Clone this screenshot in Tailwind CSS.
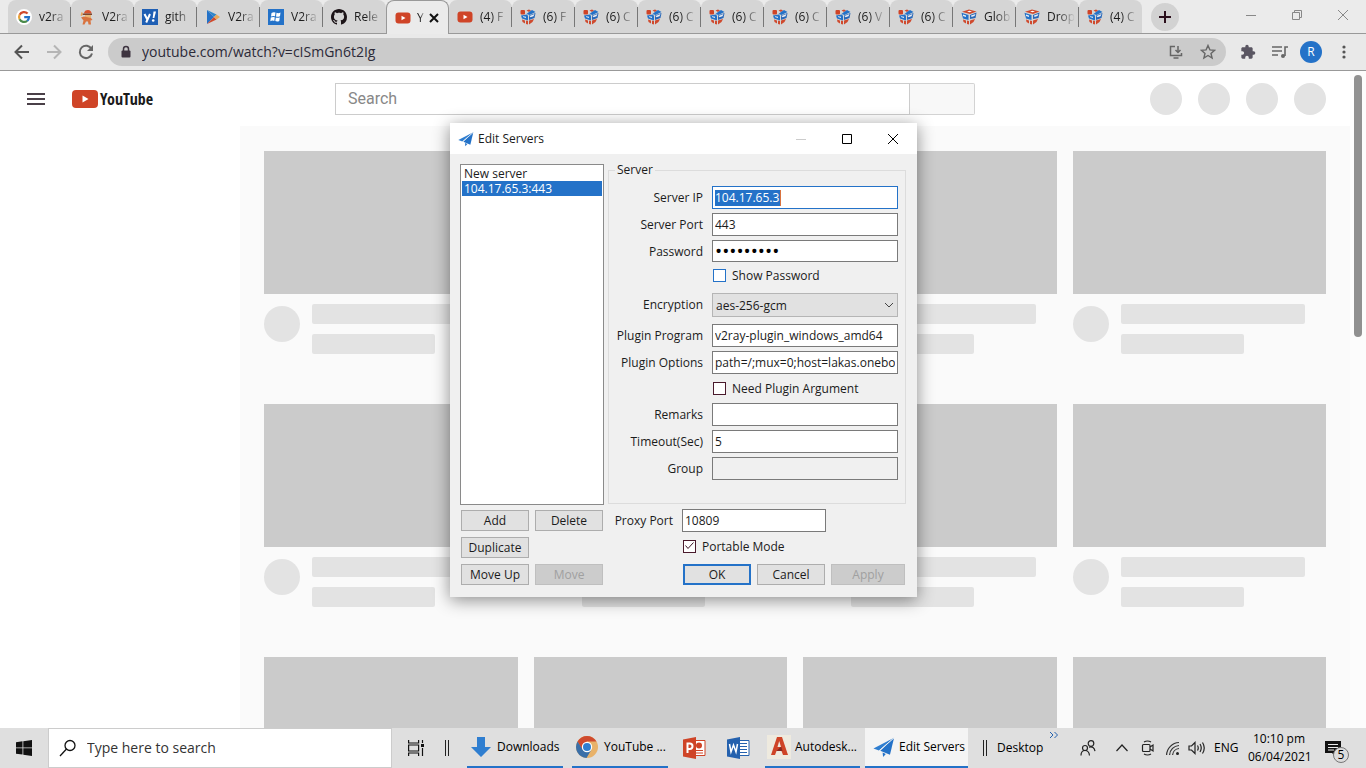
<!DOCTYPE html>
<html lang="en">
<head>
  <meta charset="UTF-8" />
  <meta name="viewport" content="width=device-width, initial-scale=1.0" />
  <title>YouTube</title>
  <script src="https://cdn.jsdelivr.net/npm/@tailwindcss/browser@4"></script>
</head>
<body class="h-screen flex flex-col overflow-hidden bg-white text-[#1b1b1b] text-xs font-['Open_Sans','Noto_Sans',sans-serif]">

  <!-- shared icons -->
  <svg class="hidden">
    <symbol id="i-google" viewBox="0 0 16 16">
      <circle cx="8" cy="8" r="8" fill="#fff"/>
      <g fill="none" stroke-width="2.2">
        <path d="M11.6 4.6A5 5 0 0 0 3.6 5.8" stroke="#d04a2c"/>
        <path d="M3.6 5.8a5 5 0 0 0 0 4.4" stroke="#e8a33a"/>
        <path d="M3.6 10.2a5 5 0 0 0 7.6 1.6" stroke="#4a8a4a"/>
        <path d="M11.2 11.8A5 5 0 0 0 13 8.2H8.2" stroke="#2472c8"/>
      </g>
    </symbol>
    <symbol id="i-pirate" viewBox="0 0 16 16">
      <path d="M5 4.500C5 2 7 1 9 1s3.500 1.500 3.500 3.500z" fill="#d9532f"/>
      <path d="M3.500 4.500H13V6H3.500z" fill="#7a4630"/>
      <path d="M6 6h6v3H6z" fill="#eab676"/>
      <path d="M2 8.500l3-1 7 1.500 1.500 2-2 .5.5 4h-2.500l-.5-3H7l-1.500 3H3.500l1-4z" fill="#d9733f"/>
      <path d="M2.500 3l1.500 1-1 3-1.500-.5z" fill="#e8a35a"/>
    </symbol>
    <symbol id="i-yahoo" viewBox="0 0 16 16">
      <path d="M0 0h16v16H0z" fill="#1f5fb4"/>
      <path d="M2.500 5l2.800 5.500M8 5l-3.800 8.500" stroke="#fff" stroke-width="2" fill="none"/>
      <path d="M11.500 2.500h2.500L12.300 9h-1.600z" fill="#fff"/>
      <circle cx="11.200" cy="11.500" r="1.300" fill="#fff"/>
    </symbol>
    <symbol id="i-play" viewBox="0 0 16 16">
      <path d="M2 1v14l7-7z" fill="#2472c8"/>
      <path d="M2 1l7 7 2.500-2.500z" fill="#2f86c9"/>
      <path d="M2 15l7-7 2.500 2.500z" fill="#d04a2c"/>
      <path d="M11.500 5.500L15 8l-3.500 2.500L9 8z" fill="#e8a95a"/>
    </symbol>
    <symbol id="i-win" viewBox="0 0 16 16">
      <path d="M0 0h16v16H0z" fill="#2472c8"/>
      <path d="M3.500 4q2-1.200 4-.4l-.5 3.600q-2-.7-4 .3zM8.500 3.800q2 .8 4-.2L12 7.200q-2 1-4 .3zM2.800 8.500q2-1 4-.3l-.5 3.700q-2-.8-4 .3zM7.800 8.500q2 .8 4-.2l-.5 3.600q-2 1-4 .2z" fill="#fff"/>
    </symbol>
    <symbol id="i-github" viewBox="0 0 16 16">
      <path fill="#1c1418" d="M8 0C3.580 0 0 3.580 0 8c0 3.540 2.290 6.530 5.470 7.590.4.070.55-.17.55-.38 0-.19-.01-.82-.01-1.490-2.010.37-2.530-.49-2.690-.94-.09-.23-.48-.94-.82-1.130-.28-.15-.68-.52-.01-.53.63-.01 1.080.58 1.230.82.72 1.210 1.870.87 2.330.66.07-.52.28-.87.51-1.070-1.780-.2-3.640-.89-3.640-3.950 0-.87.31-1.590.82-2.150-.08-.2-.36-1.020.08-2.120 0 0 .67-.21 2.200.82.64-.18 1.320-.27 2-.27s1.360.09 2 .27c1.530-1.040 2.200-.82 2.200-.82.44 1.100.16 1.920.08 2.120.51.56.82 1.270.82 2.150 0 3.070-1.870 3.750-3.650 3.950.29.25.54.73.54 1.480 0 1.070-.01 1.930-.01 2.200 0 .21.15.46.55.38A8.010 8.010 0 0 0 16 8c0-4.420-3.580-8-8-8z"/>
    </symbol>
    <symbol id="i-yt" viewBox="0 0 16 16">
      <rect x="0.500" y="2.500" width="15" height="11" rx="3" fill="#cf4427"/>
      <path d="M6.500 5.700v4.600L10.500 8z" fill="#fff"/>
    </symbol>
    <symbol id="i-cube" viewBox="0 0 16 16">
      <path d="M1 2.800L8 .5l7.500 2L9 5z" fill="#cf4a2e"/>
      <path d="M6 2.600l2.500-.8 2.500.8-2.500.7z" fill="#fff"/>
      <path d="M.5 3.800L7.500 6v5L2 9.500z" fill="#2472c8"/>
      <path d="M15.500 3.500L9 6v4l5.500-1z" fill="#2a68b8"/>
      <path d="M10 6.500l4.500-1.500-1 2-3 1z" fill="#e9edf4"/>
      <path d="M2 5.500l3 1v1.500L2 7z" fill="#e9edf4"/>
      <path d="M2 10.500l3 1v3L2.500 13zM6 11.500l2 .5v3.500L6 15zM9 11.500l5-1.500-1.500 3L9 15.500z" fill="#cf4a2e"/>
    </symbol>
    <symbol id="i-cubedot" viewBox="0 0 16 16">
      <path d="M6.500 1.500L9 .5l2 1-2 1.500z" fill="#cf4a2e"/>
      <path d="M9 3l3-2 3.500 2L9.500 6 6.500 5z" fill="#2472c8"/>
      <path d="M1 6.500l6-1 1 1.500v4.500L2 9.500z" fill="#2472c8"/>
      <path d="M15.500 4L9 6.500V11l5.500-2z" fill="#2a68b8"/>
      <path d="M9.500 7l5-2-1 2.200-3 1zM3 7.200l3 .5v1.300L3 8z" fill="#e9edf4"/>
      <path d="M2 10.500l3 1v3L2.500 13zM6 11.500l2 .5v3.500L6 15zM9 11.500l5-1.500-1.500 3L9 15.500z" fill="#cf4a2e"/>
      <rect x="0.500" y="1" width="4.500" height="4.500" rx="1" fill="#cf4427"/>
    </symbol>
    <symbol id="i-plane" viewBox="0 0 24 24">
      <path d="M23 2L.5 13.500l6 2.300z" fill="#2f7ed0"/>
      <path d="M23 2L8 16l10.500 4.500z" fill="#2472c8"/>
      <path d="M10.500 18l3.500 1.500-3 3.500z" fill="#2472c8"/>
      <path d="M23 2L7 15.800" stroke="#f2f2f2" stroke-width="1"/>
    </symbol>
  </svg>

  <!-- tab strip -->
  <header class="h-[34px] shrink-0 flex bg-[#ebebeb] border-b border-[#999]">
    <nav id="tabs" class="flex pl-2 h-[34px]"></nav>
    <button class="ml-[9px] mt-[3px] size-7 rounded-full bg-[#d2d2d2] flex items-center justify-center" aria-label="New tab">
      <svg class="size-3" viewBox="0 0 12 12" stroke="#2b0f1c" stroke-width="2"><path d="M6 0v12M0 6h12"/></svg>
    </button>
    <div class="ml-auto flex items-center gap-8 pr-4 pb-1 text-[#888]">
      <button aria-label="Minimize"><svg class="size-3.5" viewBox="0 0 14 14" fill="none" stroke="currentColor"><path d="M2 7.500h10"/></svg></button>
      <button aria-label="Restore"><svg class="size-3.5" viewBox="0 0 14 14" fill="none" stroke="currentColor"><path d="M2.500 4.500h7v7h-7zM4.500 4V2.500h7v7H10"/></svg></button>
      <button aria-label="Close"><svg class="size-3.5" viewBox="0 0 14 14" fill="none" stroke="currentColor"><path d="M2 2l10 10M12 2L2 12"/></svg></button>
    </div>
  </header>

  <!-- toolbar -->
  <div class="h-[37px] shrink-0 flex items-center bg-[#e9e9e9] border-b border-[#999] px-3.5 text-[#666]">
    <div class="flex items-center gap-4">
      <button aria-label="Back"><svg class="size-4" viewBox="0 0 16 16" fill="none" stroke="#555" stroke-width="2"><path d="M15 8H2M8 1.500L1.500 8 8 14.500"/></svg></button>
      <button aria-label="Forward"><svg class="size-4" viewBox="0 0 16 16" fill="none" stroke="#b5b5b5" stroke-width="2"><path d="M1 8h13M8 1.500L14.500 8 8 14.500"/></svg></button>
      <button aria-label="Reload"><svg class="size-4" viewBox="0 0 16 16" fill="none" stroke="#666" stroke-width="2"><path d="M13.500 5A6.200 6.200 0 1 0 14 9.500"/><path d="M15 1v6H9z" fill="#666" stroke="none"/></svg></button>
    </div>
    <div class="ml-3.5 flex-1 h-7 rounded-full bg-[#cbcbcb] flex items-center pl-3 pr-2.5">
      <svg class="w-3 h-3.5" viewBox="0 0 12 14"><path d="M3.500 6V4a2.500 2.500 0 0 1 5 0v2" fill="none" stroke="#3e3440" stroke-width="1.500"/><rect x="1.500" y="5.500" width="9" height="7" rx="1" fill="#3e3440"/></svg>
      <input class="ml-2.5 flex-1 text-sm text-[#2c2a38] outline-none" aria-label="Address" value="youtube.com/watch?v=cISmGn6t2Ig" />
      <button aria-label="Install"><svg class="size-3.5" viewBox="0 0 14 14" fill="none" stroke="#666" stroke-width="1.500"><path d="M6 1.500H1.500v9h11V8M4.500 13h5M9 1v6M6.500 5L9 7.500 11.500 5"/></svg></button>
      <button class="ml-[17px]" aria-label="Bookmark"><svg class="size-4" viewBox="0 0 16 16" fill="none" stroke="#666" stroke-width="1.400"><path d="M8 1.500l1.900 4.400 4.700.4-3.600 3.100 1.100 4.600L8 11.500 3.900 14 5 9.400 1.400 6.300l4.700-.4z"/></svg></button>
    </div>
    <button class="ml-3.5" aria-label="Extensions"><svg class="size-4" viewBox="0 0 24 24" fill="#5a5662"><path d="M20.500 11H19V7c0-1.100-.9-2-2-2h-4V3.500a2.500 2.500 0 0 0-5 0V5H4c-1.100 0-2 .9-2 2v3.800h1.500a2.700 2.700 0 0 1 0 5.400H2V20c0 1.100.9 2 2 2h3.800v-1.500a2.700 2.700 0 0 1 5.400 0V22H17c1.100 0 2-.9 2-2v-4h1.500a2.500 2.500 0 0 0 0-5z"/></svg></button>
    <button class="ml-4" aria-label="Media"><svg class="size-4" viewBox="0 0 16 16" fill="none" stroke="#666" stroke-width="1.600"><path d="M0 3h10M0 7h10M0 11h6M16 3h-3v9"/><circle cx="11" cy="12" r="2" fill="#666" stroke="none"/></svg></button>
    <button class="ml-3 size-[22px] rounded-full bg-[#2472c8] text-white text-xs" aria-label="Profile">R</button>
    <button class="ml-3.5" aria-label="Menu"><svg class="size-4" viewBox="0 0 16 16" fill="#555"><circle cx="8" cy="3" r="1.600"/><circle cx="8" cy="8" r="1.600"/><circle cx="8" cy="13" r="1.600"/></svg></button>
  </div>

  <!-- page -->
  <main class="relative flex-1 min-h-0 flex overflow-hidden">
    <div class="flex-1 flex flex-col min-w-0">
      <div class="h-[55px] shrink-0 flex items-center pl-[27px] pr-6 bg-white">
        <button aria-label="Guide"><svg class="w-[18px] h-3" viewBox="0 0 18 12" stroke="#4a4048" stroke-width="2"><path d="M0 1h18M0 6h18M0 11h18"/></svg></button>
        <a href="#" class="ml-[27px] w-20 flex items-center gap-0.5" aria-label="YouTube home">
          <svg class="w-[26px] h-[18px] shrink-0" viewBox="0 0 26 18"><rect width="26" height="18" rx="4" fill="#cf4427"/><path d="M10.500 5.500v7l6-3.500z" fill="#fff"/></svg>
          <span class="text-base leading-5 font-bold font-['Liberation_Sans_Narrow','Open_Sans_Condensed','Roboto_Condensed','DejaVu_Sans_Condensed',sans-serif]">YouTube</span>
        </a>
        <form class="ml-[183px] flex h-8 w-[640px]">
          <input class="flex-1 min-w-0 border border-[#ccc] px-3 text-base font-[Roboto] placeholder:text-[#888] outline-none" placeholder="Search" aria-label="Search" />
          <button type="button" class="w-[65px] border border-l-0 border-[#d3d3d3] bg-[#f8f8f8] rounded-r-xs" aria-label="Search"></button>
        </form>
        <div class="ml-auto flex gap-4">
          <span class="size-8 rounded-full bg-[#e3e3e3]"></span>
          <span class="size-8 rounded-full bg-[#e3e3e3]"></span>
          <span class="size-8 rounded-full bg-[#e3e3e3]"></span>
          <span class="size-8 rounded-full bg-[#e3e3e3]"></span>
        </div>
      </div>
      <div class="flex-1 min-h-0 flex">
        <aside class="w-60 shrink-0 bg-white"></aside>
        <div id="grid" class="flex-1 grid grid-cols-4 content-start gap-x-4 gap-y-[50px] px-6 pt-[25px] bg-[#fafafa]"></div>
      </div>
    </div>
    <div class="w-4 shrink-0 bg-[#fcfcfc] flex justify-center pt-1"><div class="w-2 h-[262px] rounded-full bg-[#909090]"></div></div>

    <!-- edit servers window -->
    <section class="absolute left-[450px] top-[52px] w-[467px] bg-[#f0f0f0] shadow-[0_3px_16px_rgba(0,0,0,0.45)]">
      <div class="h-[31px] flex items-center bg-white pl-2 pr-[17px]">
        <svg class="size-4"><use href="#i-plane"/></svg>
        <h1 class="ml-1 text-xs">Edit Servers</h1>
        <div class="ml-auto flex gap-8">
          <button aria-label="Minimize"><svg class="size-3.5" viewBox="0 0 14 14" fill="none" stroke="#ccc"><path d="M2 7.500h10"/></svg></button>
          <button aria-label="Maximize"><svg class="size-3.5" viewBox="0 0 14 14" fill="none" stroke="#000"><path d="M2.500 2.500h9v9h-9z"/></svg></button>
          <button aria-label="Close"><svg class="size-3.5" viewBox="0 0 14 14" fill="none" stroke="#000"><path d="M2 2l10 10M12 2L2 12"/></svg></button>
        </div>
      </div>

      <form class="flex gap-1 pl-2.5 pr-[11px] pt-2.5 pb-3 leading-[15px]">
        <div class="w-36 shrink-0">
          <ul class="h-[341px] bg-white border border-[#8a8a8a] p-px">
            <li class="px-0.5">New server</li>
            <li class="px-0.5 bg-[#2472c8] text-white">104.17.65.3:443</li>
          </ul>
          <div class="grid grid-cols-2 gap-1.5 px-px pt-[5px]">
            <button type="button" class="h-[21px] border border-[#adadad] bg-[#e1e1e1]">Add</button>
            <button type="button" class="h-[21px] border border-[#adadad] bg-[#e1e1e1]">Delete</button>
            <button type="button" class="h-[21px] border border-[#adadad] bg-[#e1e1e1]">Duplicate</button>
            <span></span>
            <button type="button" class="h-[21px] border border-[#adadad] bg-[#e1e1e1]">Move Up</button>
            <button type="button" disabled class="h-[21px] border border-[#bfbfbf] bg-[#cccccc] text-[#a0a0a0]">Move</button>
          </div>
        </div>

        <div class="flex-1 min-w-0">
          <fieldset class="h-[340px] border border-[#dcdcdc] pr-[7px]">
            <legend class="ml-1.5 px-0.5 h-3 leading-3">Server</legend>
            <div class="grid grid-cols-[94px_1fr] gap-x-[9px] gap-y-1 items-center text-right pt-2.5">
              <label for="ip">Server IP</label>
              <div class="h-[23px] border border-[#2472c8] bg-white flex items-center px-0.5"><input id="ip" class="w-[66px] h-4 bg-[#2472c8] text-white outline-none border-r border-[#d9733f]" value="104.17.65.3" /></div>
              <label for="port">Server Port</label>
              <input id="port" class="h-[23px] min-w-0 border border-[#7a7a7a] bg-white px-0.5" value="443" />
              <label for="pw">Password</label>
              <input id="pw" type="password" class="h-[22px] min-w-0 border border-[#7a7a7a] bg-white px-0.5 text-[19px] text-black" value="abcdefghi" />
              <span></span>
              <label class="h-[19px] flex items-center gap-1.5 pl-px"><input type="checkbox" class="appearance-none size-[13px] border border-[#2472c8] bg-white" />Show Password</label>
              <label for="enc">Encryption</label>
              <div class="relative mt-1 mb-[3px]">
                <select id="enc" class="block appearance-none w-full h-6 border border-[#b5b5b5] bg-[#e1e1e1] px-[3px]"><option>aes-256-gcm</option></select>
                <svg class="absolute right-1 top-2 w-2.5 h-2 pointer-events-none" viewBox="0 0 10 8" fill="none" stroke="#444"><path d="M1 2l4 4 4-4"/></svg>
              </div>
              <label for="prog">Plugin Program</label>
              <input id="prog" class="h-[23px] min-w-0 border border-[#7a7a7a] bg-white px-0.5" value="v2ray-plugin_windows_amd64" />
              <label for="opts">Plugin Options</label>
              <input id="opts" class="h-[23px] min-w-0 border border-[#7a7a7a] bg-white px-0.5" value="path=/;mux=0;host=lakas.oneboc" />
              <span></span>
              <label class="h-[21px] flex items-center gap-1.5 pl-px"><input type="checkbox" class="appearance-none size-[13px] border border-[#4a1a2c] bg-white" />Need Plugin Argument</label>
              <label for="rem">Remarks</label>
              <input id="rem" class="h-[23px] min-w-0 border border-[#7a7a7a] bg-white px-0.5" />
              <label for="time">Timeout(Sec)</label>
              <input id="time" class="h-[23px] min-w-0 border border-[#7a7a7a] bg-white px-0.5" value="5" />
              <label for="group">Group</label>
              <input id="group" disabled class="h-[23px] min-w-0 border border-[#7a7a7a] bg-[#f0f0f0] px-0.5" />
            </div>
          </fieldset>
          <div class="grid grid-cols-[65px_144px] gap-x-[9px] items-center text-right pt-[5px]">
            <label for="proxy">Proxy Port</label>
            <input id="proxy" class="h-[23px] min-w-0 border border-[#7a7a7a] bg-white px-0.5" value="10809" />
            <span></span>
            <label class="relative h-7 flex items-center gap-1.5 pl-px"><input type="checkbox" checked class="appearance-none size-[13px] border border-[#4a1a2c] bg-white" /><svg class="absolute left-0.5 top-2 size-[11px]" viewBox="0 0 11 11" fill="none" stroke="#3a1424"><path d="M1.500 5.500l2.500 3 5.500-6"/></svg>Portable Mode</label>
          </div>
          <div class="flex gap-1.5 pl-[75px] pr-px pt-1">
            <button type="button" class="w-[68px] h-[21px] border-2 border-[#2472c8] bg-[#e1e1e1] leading-4">OK</button>
            <button type="button" class="w-[68px] h-[21px] border border-[#adadad] bg-[#e1e1e1]">Cancel</button>
            <button type="button" disabled class="flex-1 h-[21px] border border-[#bfbfbf] bg-[#cccccc] text-[#a0a0a0]">Apply</button>
          </div>
        </div>
      </form>
    </section>
  </main>

  <!-- taskbar -->
  <footer class="h-10 shrink-0 flex items-stretch bg-[#dfdfdf] text-black">
    <button class="w-12 flex items-center justify-center" aria-label="Start"><svg class="size-4" viewBox="0 0 16 16" fill="#111"><path d="M0 2.200L6.500 1.300v6.200H0zM7.300 1.200L16 0v7.500H7.300zM0 8.300h6.500v6.300L0 13.700zM7.300 8.300H16V16l-8.700-1.200z"/></svg></button>
    <label class="w-[344px] flex items-center bg-white border border-[#ccc] pl-2.5">
      <svg class="size-4.5" viewBox="0 0 18 18" fill="none" stroke="#111" stroke-width="1.300"><circle cx="11" cy="6.500" r="5"/><path d="M7.500 10L1 17"/></svg>
      <input class="ml-2.5 flex-1 text-sm outline-none placeholder:text-[#333]" placeholder="Type here to search" aria-label="Type here to search" />
    </label>
    <button class="ml-4 flex items-center" aria-label="Task view"><svg class="size-4" viewBox="0 0 16 16" fill="none" stroke="#111" stroke-width="1.200"><path d="M.6 0v3h10V0M.6 16v-3h10v3M.6 5h10v6H.6zM14.500 0v3M14.500 8v8"/><path d="M13 4h3v3h-3z" fill="#111" stroke="none"/></svg></button>
    <span class="ml-[21px] my-3 w-1 border-x border-[#222]"></span>
    <button class="ml-[18px] w-24 pl-1 flex items-center gap-1.5 border-b-2 border-[#2472c8] whitespace-nowrap">
      <svg class="w-5 h-5" viewBox="0 0 20 20"><path d="M6 0h8v10h6L10 20 0 10h6z" fill="#2f7ed0"/></svg>Downloads
    </button>
    <button class="ml-[9px] w-24 pl-1 flex items-center gap-1.5 border-b-2 border-[#2472c8] whitespace-nowrap">
      <svg class="size-[22px] shrink-0" viewBox="0 0 22 22"><circle cx="11" cy="11" r="11" fill="#e8b26a"/><path d="M1.500 5.500A11 11 0 0 1 20.500 5.500H11L6.200 13.700z" fill="#cf4a2e"/><path d="M1.500 5.500A11 11 0 0 0 10.500 22l5-8.500-9-.3z" fill="#3a6fa8"/><circle cx="11" cy="11" r="5.200" fill="#fff"/><circle cx="11" cy="11" r="4" fill="#2f7ed0"/></svg>YouTube ...
    </button>
    <button class="ml-[14px] flex items-center" aria-label="PowerPoint"><svg class="w-6 h-[22px]" viewBox="0 0 24 22"><path d="M12 3.500h11v15H12z" fill="#fff" stroke="#cf4427"/><circle cx="17" cy="8.500" r="3" fill="#cf4427"/><path d="M14 13.500h7M14 16h7" stroke="#cf4427"/><path d="M1 2.500L14 0v22L1 19.500z" fill="#cf4427"/><path d="M5.500 16V6.500h2.300a2.700 2.700 0 0 1 0 5.400H5.500" fill="none" stroke="#fff" stroke-width="2"/></svg></button>
    <button class="ml-5 flex items-center" aria-label="Word"><svg class="w-6 h-[22px]" viewBox="0 0 24 22"><path d="M12 3.500h11v15H12z" fill="#fff" stroke="#2461ae"/><path d="M14 6.500h7M14 9.500h7M14 12.500h7M14 15.500h7" stroke="#2461ae"/><path d="M1 2.500L14 0v22L1 19.500z" fill="#2461ae"/><path d="M3.500 7l1.500 8L7.500 8l2.500 7 1.500-8" fill="none" stroke="#fff" stroke-width="1.500"/></svg></button>
    <button class="ml-[15px] w-[95px] pl-0.5 flex items-center gap-1 border-b-2 border-[#2472c8] whitespace-nowrap">
      <svg class="size-6 shrink-0" viewBox="0 0 24 24"><path d="M0 0h24v24H0z" fill="#eeeadf"/><path d="M4 20L10 2h5l6 18h-5l-1.500-4H9.500L8 20z" fill="#cf4427"/><path d="M10.500 12h3.500l-1.800-6z" fill="#eeeadf"/><path d="M9.500 16l4-4h.8l1.200 4z" fill="#8a2a22"/></svg>Autodesk...
    </button>
    <button class="ml-[5px] w-[103px] pl-2 flex items-center gap-1 bg-[#f4f4f4] border-b-2 border-[#2472c8] whitespace-nowrap">
      <svg class="size-[22px] shrink-0"><use href="#i-plane"/></svg>Edit Servers
    </button>
    <span class="ml-[15px] my-3 w-1 border-x border-[#222]"></span>
    <a href="#" class="ml-2.5 flex items-center">Desktop</a>
    <svg class="ml-1.5 mt-1 w-2.5 h-1.5" viewBox="0 0 10 6" fill="none" stroke="#2461ae"><path d="M1 0l3 3-3 3M5.500 0l3 3-3 3"/></svg>
    <div class="ml-auto flex items-center pr-6">
      <svg class="size-4" viewBox="0 0 16 16" fill="none" stroke="#222" stroke-width="1.200"><circle cx="11" cy="3.500" r="2.800"/><path d="M9 7.200q5-1.500 6 4"/><circle cx="5" cy="8" r="2.500"/><path d="M1 15.500q0-5 4-5t4.500 5"/></svg>
      <svg class="ml-5 w-3 h-2" viewBox="0 0 12 8" fill="none" stroke="#222" stroke-width="1.200"><path d="M.5 7L6 1l5.500 6"/></svg>
      <svg class="ml-3 size-4" viewBox="0 0 16 16" fill="none" stroke="#222" stroke-width="1.200"><rect x="2.500" y="4.500" width="7.500" height="7" rx="1"/><path d="M10 7l3-2v6l-3-2M4 2q3.500-2 7 0M4 14q3.500 2 7 0"/></svg>
      <svg class="ml-2.5 size-3.5" viewBox="0 0 14 14" fill="none" stroke="#333" stroke-width="1.200"><path d="M.6 14A13 13 0 0 1 13 1.500M3.600 14A10 10 0 0 1 13 4.500M6.600 14A7 7 0 0 1 13 7.500"/><circle cx="11.500" cy="12.500" r="1.500" fill="#222" stroke="none"/></svg>
      <svg class="ml-2 w-[18px] h-3.5" viewBox="0 0 18 14" fill="none" stroke="#222" stroke-width="1.200"><path d="M1 5h2.500L7 1.500v11L3.500 9H1zM9.500 4.500q1.500 2.500 0 5M12 3q2.500 4 0 8M14.500 1.500q3.500 5.500 0 11"/></svg>
      <span class="ml-2 w-6">ENG</span>
      <div class="ml-2.5 w-[62px] text-center leading-[18px]"><div>10:10 pm</div><div>06/04/2021</div></div>
      <div class="relative ml-[15px]">
        <svg class="size-[17px]" viewBox="0 0 17 17"><path d="M0 1h16v12h-5v4l-4-4H0z" fill="#111"/><path d="M3 4.500h10M3 7.500h10M3 10h6" stroke="#e8e8e8"/></svg>
        <span class="absolute left-2 top-[7px] size-4 rounded-full border border-[#777] bg-[#dcdcdc] text-center leading-[14px]">5</span>
      </div>
    </div>
  </footer>

  <script>
    const tabs = [
      ['google', 'v2ra'], ['pirate', 'V2ra'], ['yahoo', 'gith'], ['play', 'V2ra'], ['win', 'V2ra'], ['github', 'Rele'],
      ['yt', 'Y', true], ['yt', '(4) F'], ['cubedot', '(6) F'], ['cubedot', '(6) C'], ['cubedot', '(6) C'], ['cubedot', '(6) C'],
      ['cubedot', '(6) C'], ['cubedot', '(6) V'], ['cubedot', '(6) C'], ['cube', 'Glob'], ['cube', 'Drop'], ['cubedot', '(4) C']
    ];

    const close = '<svg class="size-2.5 shrink-0" viewBox="0 0 10 10" stroke="#111" stroke-width="2"><path d="M1 1l8 8M9 1L1 9"/></svg>';

    document.getElementById('tabs').innerHTML = tabs.map(([icon, title, active], i) => {
      const line = !active && (!tabs[i + 1] || !tabs[i + 1][2]) && i < tabs.length - 1;
      return `
      <div class="w-[63px] h-full ${active ? 'bg-[#ebebeb] border border-b-0 border-[#999]' : 'bg-[#d5d5d5] border-b border-[#999]'} rounded-t-lg flex items-center">
        <a href="#" class="h-5 flex-1 min-w-0 flex items-center pl-2 ${line ? 'border-r border-[#777]' : ''}">
          <svg class="size-4 shrink-0"><use href="#i-${icon}"/></svg>
          <span class="${active ? 'ml-1.5 w-2' : 'ml-[7px] w-7'} whitespace-nowrap mask-r-from-40%">${title}</span>
          ${active ? '<span class="ml-1">' + close + '</span>' : ''}
        </a>
      </div>`;
    }).join('');

    // Loading placeholders
    document.getElementById('grid').innerHTML = Array(12).fill(`
      <div>
        <div class="h-[143px] bg-[#cbcbcb]"></div>
        <div class="flex gap-3 pt-2.5">
          <span class="mt-0.5 size-9 shrink-0 rounded-full bg-[#e3e3e3]"></span>
          <div class="flex-1">
            <div class="h-5 w-[90%] rounded-xs bg-[#e3e3e3]"></div>
            <div class="mt-2.5 h-5 w-3/5 rounded-xs bg-[#e3e3e3]"></div>
          </div>
        </div>
      </div>`).join('');
  </script>
</body>
</html>
